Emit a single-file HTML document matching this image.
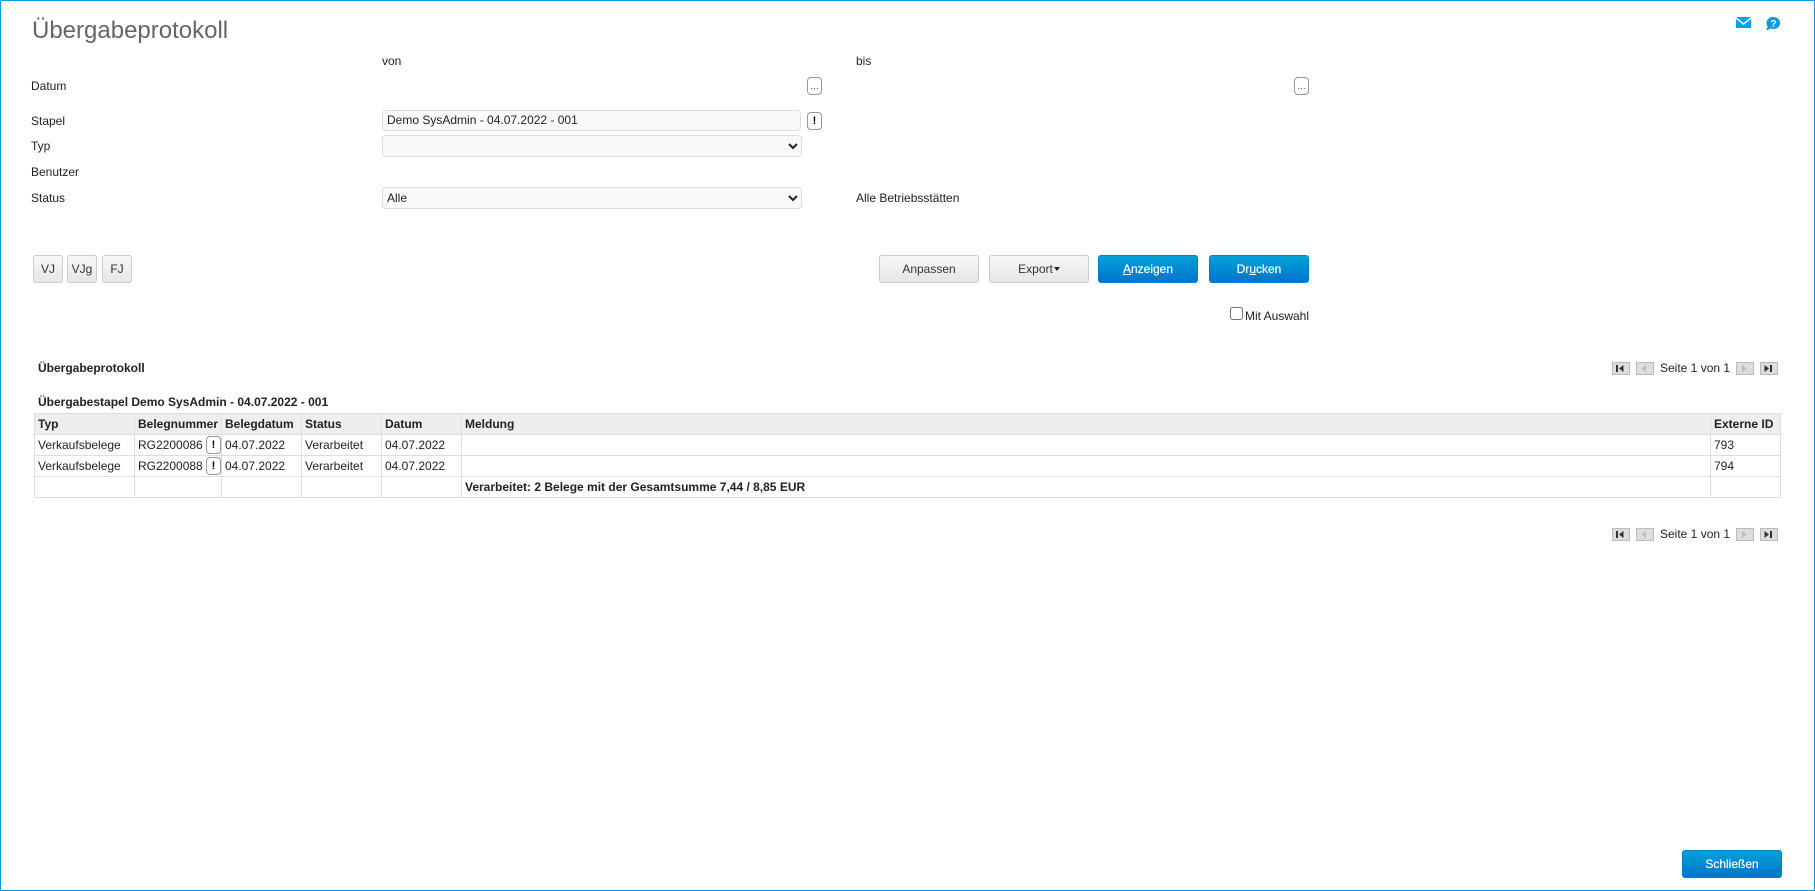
<!DOCTYPE html>
<html lang="de">
<head>
<meta charset="utf-8">
<title>Übergabeprotokoll</title>
<style>
html,body{margin:0;padding:0;background:#fff;}
body{width:1815px;height:891px;position:relative;overflow:hidden;font-family:"Liberation Sans",Arial,sans-serif;font-size:12px;color:#222;}
#frame{position:absolute;left:0;top:0;width:1813px;height:889px;border:1px solid #00a2e8;}
.a{position:absolute;white-space:nowrap;line-height:14px;}
h1{position:absolute;left:32px;top:17px;margin:0;font-size:24px;font-weight:normal;color:#666;line-height:28px;white-space:nowrap;}
.inp{position:absolute;box-sizing:border-box;border:1px solid #ddd;border-radius:4px;background:#fafafa;padding:0 4px;line-height:18px;color:#222;}
select{position:absolute;box-sizing:border-box;border:1px solid #ddd;border-radius:4px;background:#fafafa;font:12px "Liberation Sans",Arial,sans-serif;color:#222;margin:0;padding:0;}
.sm{position:absolute;box-sizing:border-box;width:15px;height:18px;border:1px solid #999;border-radius:4px;background:#fff;text-align:center;color:#111;}
.dots{font-size:10px;line-height:18px;color:#555;}
.ex{font-size:11px;line-height:16px;font-weight:bold;color:#000;}
.btn{position:absolute;box-sizing:border-box;height:28px;border:1px solid #ccc;border-radius:3px;background:linear-gradient(#f8f8f8,#e6e6e6);text-align:center;line-height:26px;color:#333;}
.blue{border:1px solid #0183cc;background:linear-gradient(#02a0d8,#0074cc);color:#fff;font-weight:normal;-webkit-text-stroke:.2px #fff;}
.u{text-decoration:underline;}
table{position:absolute;left:34px;top:413px;width:1746px;height:84px;border-collapse:collapse;table-layout:fixed;}
th,td{box-sizing:border-box;border:1px solid #ddd;padding:0 3px;height:21px;font-size:12px;text-align:left;white-space:nowrap;overflow:visible;color:#222;}
th{background:#eee;font-weight:bold;}
.pb{position:absolute;box-sizing:border-box;width:18px;height:13px;background:#ddd;border:1px solid #bbb;}
.pb svg{position:absolute;left:0;top:0;width:16px;height:11px;display:block;}
</style>
</head>
<body>
<div id="frame"></div>

<h1>Übergabeprotokoll</h1>

<svg class="a" style="left:1736px;top:17px" width="15" height="11" viewBox="0 0 15 11"><path fill="#00a2e8" d="M0 0H15L7.5 6ZM0 2L7.5 8L15 2V11H0Z"/></svg>
<svg class="a" style="left:1765px;top:17px" width="15" height="14" viewBox="0 0 15 14"><path fill="#0a9be0" d="M8.5 0a6.5 6 0 1 1-2.8 11.4C4.2 12.6 2.500 13.200.5 13.300 1.800 12.300 2.400 11 2.500 9.200A6.500 6 0 0 1 8.500 0Z"/><text x="8.500" y="10" font-family="Liberation Sans" font-size="10" font-weight="bold" fill="#fff" text-anchor="middle">?</text></svg>

<div class="a" style="left:382px;top:54px">von</div>
<div class="a" style="left:856px;top:54px">bis</div>
<div class="a" style="left:31px;top:79px">Datum</div>
<div class="sm dots" style="left:807px;top:77px">...</div>
<div class="sm dots" style="left:1294px;top:77px">...</div>

<div class="a" style="left:31px;top:114px">Stapel</div>
<div class="inp" style="left:382px;top:110px;width:419px;height:21px">Demo SysAdmin - 04.07.2022 - 001</div>
<div class="sm ex" style="left:807px;top:112px">!</div>

<div class="a" style="left:31px;top:139px">Typ</div>
<select style="left:382px;top:135px;width:420px;height:22px"><option></option></select>

<div class="a" style="left:31px;top:165px">Benutzer</div>

<div class="a" style="left:31px;top:191px">Status</div>
<select style="left:382px;top:187px;width:420px;height:22px"><option>Alle</option></select>
<div class="a" style="left:856px;top:191px">Alle Betriebsstätten</div>

<div class="btn" style="left:33px;top:255px;width:30px">VJ</div>
<div class="btn" style="left:67px;top:255px;width:30px">VJg</div>
<div class="btn" style="left:102px;top:255px;width:30px">FJ</div>

<div class="btn" style="left:879px;top:255px;width:100px">Anpassen</div>
<div class="btn" style="left:989px;top:255px;width:100px">Export<span style="display:inline-block;width:0;height:0;border:3.5px solid transparent;border-top:4px solid #222;border-bottom:0;vertical-align:2px;margin-left:1px"></span></div>
<div class="btn blue" style="left:1098px;top:255px;width:100px"><span class="u">A</span>nzeigen</div>
<div class="btn blue" style="left:1209px;top:255px;width:100px">Dr<span class="u">u</span>cken</div>

<input type="checkbox" style="position:absolute;left:1230px;top:307px;width:13px;height:13px;margin:0">
<div class="a" style="left:1245px;top:309px">Mit Auswahl</div>

<div class="a" style="left:38px;top:361px;font-weight:bold">Übergabeprotokoll</div>
<div class="a" style="left:38px;top:395px;font-weight:bold">Übergabestapel Demo SysAdmin - 04.07.2022 - 001</div>

<div class="pb" style="left:1612px;top:362px"><svg viewBox="0 0 16 11"><path fill="#333" d="M3 2h2v7H3zM10.500 2v7L6 5.500z"/></svg></div>
<div class="pb" style="left:1636px;top:362px"><svg viewBox="0 0 16 11"><path fill="#bbb" d="M9 2v7L4.500 5.500z"/></svg></div>
<div class="a" style="left:1660px;top:361px">Seite 1 von 1</div>
<div class="pb" style="left:1736px;top:362px"><svg viewBox="0 0 16 11"><path fill="#bbb" d="M5 2v7L9.500 5.500z"/></svg></div>
<div class="pb" style="left:1760px;top:362px"><svg viewBox="0 0 16 11"><path fill="#333" d="M3.500 2v7L8 5.500zM9 2h2v7H9z"/></svg></div>

<table>
<colgroup><col style="width:100px"><col style="width:87px"><col style="width:80px"><col style="width:80px"><col style="width:80px"><col style="width:1249px"><col style="width:70px"></colgroup>
<tr><th>Typ</th><th>Belegnummer</th><th>Belegdatum</th><th>Status</th><th>Datum</th><th>Meldung</th><th>Externe ID</th></tr>
<tr><td>Verkaufsbelege</td><td>RG2200086</td><td>04.07.2022</td><td>Verarbeitet</td><td>04.07.2022</td><td></td><td>793</td></tr>
<tr><td>Verkaufsbelege</td><td>RG2200088</td><td>04.07.2022</td><td>Verarbeitet</td><td>04.07.2022</td><td></td><td>794</td></tr>
<tr><td></td><td></td><td></td><td></td><td></td><td style="font-weight:bold">Verarbeitet: 2 Belege mit der Gesamtsumme 7,44 / 8,85 EUR</td><td></td></tr>
</table>
<div class="sm ex" style="left:206px;top:436px">!</div>
<div class="sm ex" style="left:206px;top:457px">!</div>

<div class="pb" style="left:1612px;top:528px"><svg viewBox="0 0 16 11"><path fill="#333" d="M3 2h2v7H3zM10.500 2v7L6 5.500z"/></svg></div>
<div class="pb" style="left:1636px;top:528px"><svg viewBox="0 0 16 11"><path fill="#bbb" d="M9 2v7L4.500 5.500z"/></svg></div>
<div class="a" style="left:1660px;top:527px">Seite 1 von 1</div>
<div class="pb" style="left:1736px;top:528px"><svg viewBox="0 0 16 11"><path fill="#bbb" d="M5 2v7L9.500 5.500z"/></svg></div>
<div class="pb" style="left:1760px;top:528px"><svg viewBox="0 0 16 11"><path fill="#333" d="M3.500 2v7L8 5.500zM9 2h2v7H9z"/></svg></div>

<div class="btn blue" style="left:1682px;top:850px;width:100px">Schließen</div>
</body>
</html>
